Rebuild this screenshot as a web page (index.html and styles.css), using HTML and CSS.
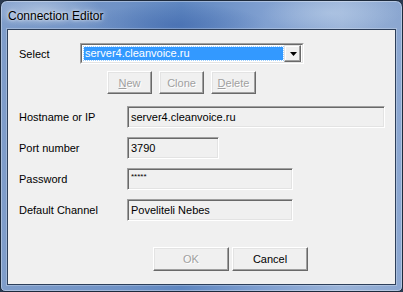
FILE: index.html
```html
<!DOCTYPE html>
<html>
<head>
<meta charset="utf-8">
<link rel="stylesheet" href="styles.css">
</head>
<body>
<div class="window">
  <div class="titlebar"><span class="title">Connection Editor</span></div>
  <div class="client">
    <div class="select-row">
      <span class="lbl">Select</span>
      <div class="combo">
        <div class="combo-field"><span class="sel">server4.cleanvoice.ru</span></div>
        <div class="combo-btn">
          <svg width="7" height="4" viewBox="0 0 7 4"><path d="M0 0H7L3.5 4Z" fill="#000"/></svg>
        </div>
      </div>
    </div>
    <div class="btn-row">
      <div class="btn btn-sm disabled"><span><u>N</u>ew</span></div>
      <div class="btn btn-sm disabled"><span>Clone</span></div>
      <div class="btn btn-sm disabled"><span><u>D</u>elete</span></div>
    </div>
    <div class="fields">
      <span class="lbl">Hostname or IP</span>
      <div class="box box-host">server4.cleanvoice.ru</div>
      <span class="lbl">Port number</span>
      <div class="box box-port">3790</div>
      <span class="lbl">Password</span>
      <div class="box box-pass"><span class="stars">*****</span></div>
      <span class="lbl">Default Channel</span>
      <div class="box box-chan">Poveliteli Nebes</div>
    </div>
    <div class="footer">
      <div class="btn btn-lg disabled"><span>OK</span></div>
      <div class="btn btn-lg"><span>Cancel</span></div>
    </div>
  </div>
</div>
</body>
</html>
```

FILE: styles.css
```css
* { box-sizing: border-box; }
html, body { margin: 0; padding: 0; background: #2a3a50; }
body { width: 403px; height: 292px; overflow: hidden; font-family: "Liberation Sans", Arial, sans-serif; }

.window {
  width: 403px;
  height: 292px;
  border: 1px solid #1d2a3c;
  border-radius: 7px 7px 5px 5px;
  padding: 0 6px 6px 6px;
  display: flex;
  flex-direction: column;
  background:
    radial-gradient(ellipse 90px 22px at 175px 24px, rgba(60,100,170,0.55), rgba(60,100,170,0) 100%),
    radial-gradient(ellipse 70px 20px at 330px 12px, rgba(190,210,235,0.5), rgba(190,210,235,0) 100%),
    radial-gradient(ellipse 60px 18px at 40px 8px, rgba(200,215,235,0.55), rgba(200,215,235,0) 100%),
    linear-gradient(90deg, #7f9dca 0%, #6f92c6 30%, #5e86c0 45%, #7f9fd0 65%, #9ab3d8 85%, #8aa6d0 100%);
  box-shadow: inset 0 0 0 1px rgba(255,255,255,0.35);
}

.titlebar {
  height: 28px;
  display: flex;
  align-items: center;
  padding-left: 1px;
}
.title {
  font-size: 12px;
  color: #000;
  text-shadow: 0 0 6px rgba(255,255,255,0.9), 0 0 3px rgba(255,255,255,0.8);
  margin-top: 2px;
}

.client {
  flex: 1;
  background: #f0f0f0;
  border: 1px solid #2d3f5a;
  box-shadow: 0 0 0 1px rgba(255,255,255,0.25);
  padding: 13px 0 0 11px;
  display: flex;
  flex-direction: column;
  font-size: 11px;
  color: #000;
}

.lbl { font-size: 11px; }

.select-row {
  display: flex;
  align-items: center;
  height: 21px;
}
.select-row .lbl { width: 61px; }

.combo {
  width: 224px;
  height: 21px;
  background: #fff;
  border-top: 1px solid #a0a0a0;
  border-left: 1px solid #a0a0a0;
  border-right: 1px solid #fff;
  border-bottom: 1px solid #fff;
  display: flex;
  padding: 1px;
  position: relative;
}
.combo::before {
  content: "";
  position: absolute;
  inset: 0;
  border-top: 1px solid #696969;
  border-left: 1px solid #696969;
  border-right: 1px solid #e3e3e3;
  border-bottom: 1px solid #e3e3e3;
  pointer-events: none;
}
.combo-field {
  flex: 1;
  padding: 2px 1px 2px 2px;
  display: flex;
}
.sel {
  flex: 1;
  background: #3399ff;
  color: #fff;
  font-size: 11px;
  line-height: 13px;
  padding-left: 1px;
  outline: 1px dotted #9ccfff;
}
.combo-btn {
  width: 17px;
  background: #f0f0f0;
  border-top: 1px solid #e3e3e3;
  border-left: 1px solid #e3e3e3;
  border-right: 1px solid #696969;
  border-bottom: 1px solid #696969;
  box-shadow: inset -1px -1px 0 #a0a0a0, inset 1px 1px 0 #fff;
  display: flex;
  align-items: center;
  justify-content: center;
  margin: 0 1px 0 0;
}
.combo-btn svg { margin-left: 1px; }

.btn-row {
  display: flex;
  gap: 6px;
  margin: 7px 0 0 88px;
}

.btn {
  height: 23px;
  background: #f0f0f0;
  border-top: 1px solid #fff;
  border-left: 1px solid #fff;
  border-right: 1px solid #696969;
  border-bottom: 1px solid #696969;
  box-shadow: inset -1px -1px 0 #a0a0a0, inset 1px 1px 0 #e3e3e3;
  display: flex;
  align-items: center;
  justify-content: center;
  font-size: 11px;
  color: #000;
}
.btn-sm { width: 45px; }
.btn-lg { width: 76px; height: 24px; }
.btn.disabled { color: #a0a0a0; text-shadow: 1px 1px 0 #fff; }
.btn-sm + .btn-sm { margin-left: 1px; }

.fields {
  display: grid;
  grid-template-columns: 108px auto;
  grid-auto-rows: 22px;
  row-gap: 9px;
  align-items: center;
  margin-top: 12px;
}

.box {
  height: 22px;
  background: #f0f0f0;
  border-top: 1px solid #a0a0a0;
  border-left: 1px solid #a0a0a0;
  border-right: 1px solid #fff;
  border-bottom: 1px solid #fff;
  box-shadow: inset 1px 1px 0 #696969, inset -1px -1px 0 #e3e3e3;
  font-size: 11px;
  padding: 0 3px;
  display: flex;
  align-items: center;
}
.box-host { width: 258px; }
.box-port { width: 92px; }
.box-pass { width: 166px; }
.box-chan { width: 166px; }
.stars { font-size: 8px; align-self: flex-start; margin-top: 3px; letter-spacing: 0; }

.footer {
  display: flex;
  gap: 3px;
  margin: 26px 0 0 134px;
}
```
